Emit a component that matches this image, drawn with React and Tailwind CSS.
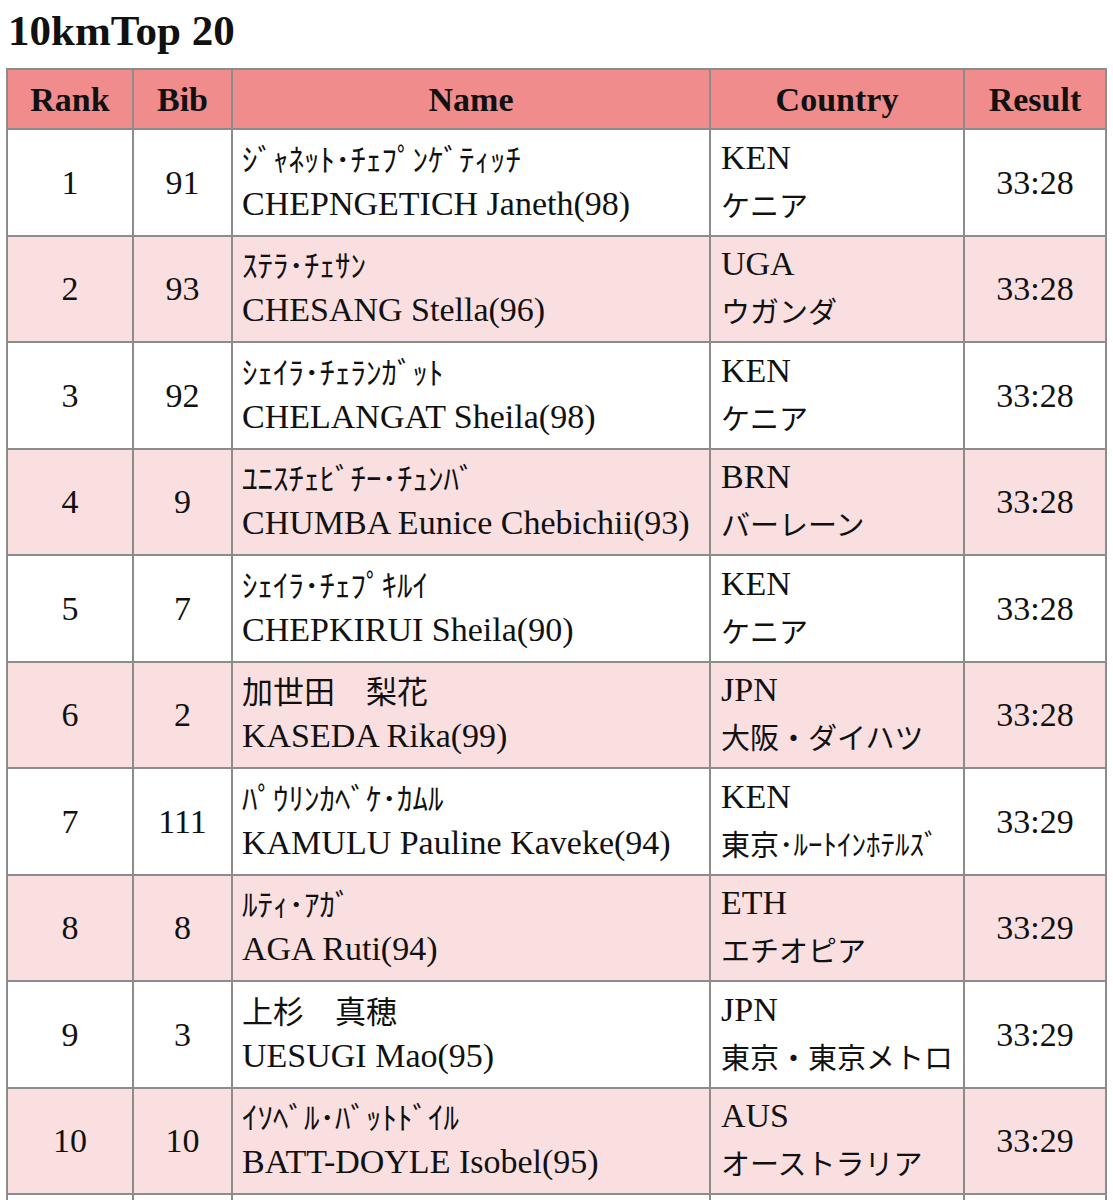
import React from 'react';

const results = [
  { rank: 1, bib: 91, kana: 'ｼﾞｬﾈｯﾄ･ﾁｪﾌﾟﾝｹﾞﾃｨｯﾁ', name: 'CHEPNGETICH Janeth(98)', code: 'KEN', country: 'ケニア', time: '33:28' },
  { rank: 2, bib: 93, kana: 'ｽﾃﾗ･ﾁｪｻﾝ', name: 'CHESANG Stella(96)', code: 'UGA', country: 'ウガンダ', time: '33:28' },
  { rank: 3, bib: 92, kana: 'ｼｪｲﾗ･ﾁｪﾗﾝｶﾞｯﾄ', name: 'CHELANGAT Sheila(98)', code: 'KEN', country: 'ケニア', time: '33:28' },
  { rank: 4, bib: 9, kana: 'ﾕﾆｽﾁｪﾋﾞﾁｰ･ﾁｭﾝﾊﾞ', name: 'CHUMBA Eunice Chebichii(93)', code: 'BRN', country: 'バーレーン', time: '33:28' },
  { rank: 5, bib: 7, kana: 'ｼｪｲﾗ･ﾁｪﾌﾟｷﾙｲ', name: 'CHEPKIRUI Sheila(90)', code: 'KEN', country: 'ケニア', time: '33:28' },
  { rank: 6, bib: 2, kana: '加世田　梨花', name: 'KASEDA Rika(99)', code: 'JPN', country: '大阪・ダイハツ', time: '33:28' },
  { rank: 7, bib: 111, kana: 'ﾊﾟｳﾘﾝｶﾍﾞｹ･ｶﾑﾙ', name: 'KAMULU Pauline Kaveke(94)', code: 'KEN', country: '東京･ﾙｰﾄｲﾝﾎﾃﾙｽﾞ', time: '33:29' },
  { rank: 8, bib: 8, kana: 'ﾙﾃｨ･ｱｶﾞ', name: 'AGA Ruti(94)', code: 'ETH', country: 'エチオピア', time: '33:29' },
  { rank: 9, bib: 3, kana: '上杉　真穂', name: 'UESUGI Mao(95)', code: 'JPN', country: '東京・東京メトロ', time: '33:29' },
  { rank: 10, bib: 10, kana: 'ｲｿﾍﾞﾙ･ﾊﾞｯﾄﾄﾞｲﾙ', name: 'BATT-DOYLE Isobel(95)', code: 'AUS', country: 'オーストラリア', time: '33:29' },
];

const cell = 'border-2 border-[#8c8c8c] align-middle';

const App = () => {
  return (
    <div className="h-[1200px] overflow-hidden bg-white text-[#111] font-['Liberation_Serif','Noto_Sans_CJK_JP',serif]">
      {/* Title */}
      <h3 className="pl-[8px] pt-[6px] mb-[12px] text-[43px] leading-[50px] font-bold">10kmTop 20</h3>

      <table className="ml-[6px] w-[1099px] table-fixed border-collapse text-[34px]">
        <colgroup>
          <col className="w-[126px]" />
          <col className="w-[99px]" />
          <col className="w-[478px]" />
          <col className="w-[254px]" />
          <col className="w-[142px]" />
        </colgroup>
        <thead>
          <tr className="h-[60px] bg-[#f08c8c] font-bold">
            <th className={cell}>Rank</th>
            <th className={cell}>Bib</th>
            <th className={cell}>Name</th>
            <th className={cell}>Country</th>
            <th className={cell}>Result</th>
          </tr>
        </thead>
        <tbody>
          {results.map((r, i) => (
            <tr key={r.rank} className={`h-[106.5px] ${i % 2 === 1 ? 'bg-[#f9dfe0]' : 'bg-white'}`}>
              <td className={`${cell} text-center`}>{r.rank}</td>
              <td className={`${cell} text-center`}>{r.bib}</td>
              <td className={`${cell} pl-[9px]`}>
                <div className="text-[31px] leading-[46px] font-['Noto_Sans_CJK_JP',sans-serif] whitespace-nowrap -mt-[3px]">{r.kana}</div>
                <div className="leading-[46px] whitespace-nowrap">{r.name}</div>
              </td>
              <td className={`${cell} pl-[10px]`}>
                <div className="leading-[46px] -mt-[3px]">{r.code}</div>
                <div className="text-[29px] leading-[46px] font-['Noto_Sans_CJK_JP',sans-serif] whitespace-nowrap">{r.country}</div>
              </td>
              <td className={`${cell} text-center`}>{r.time}</td>
            </tr>
          ))}
          <tr className="h-[106px] bg-white">
            <td className={cell}></td>
            <td className={cell}></td>
            <td className={cell}></td>
            <td className={cell}></td>
            <td className={cell}></td>
          </tr>
        </tbody>
      </table>
    </div>
  );
};

export default App;
